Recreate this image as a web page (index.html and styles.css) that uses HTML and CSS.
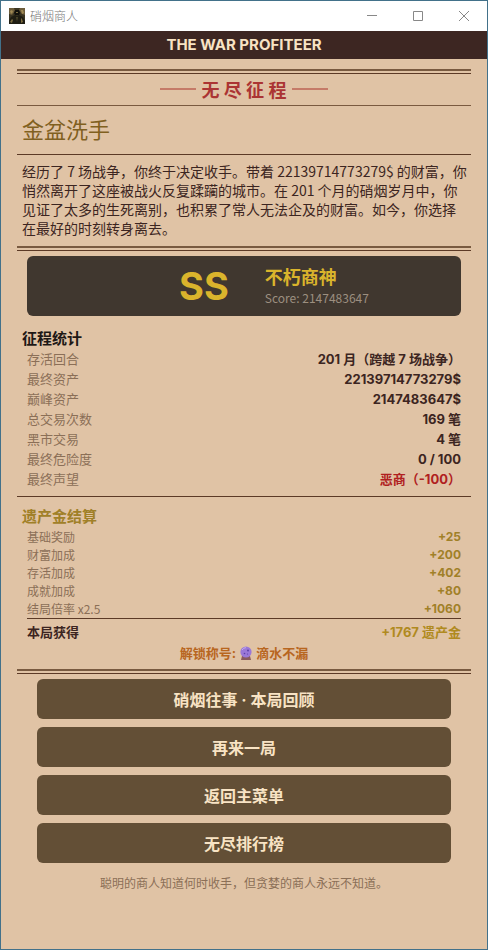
FILE: index.html
```html
<!DOCTYPE html>
<html lang="zh-CN">
<head>
    <meta charset="utf-8" />
    <meta name="viewport" content="width=device-width, initial-scale=1" />
    <title>硝烟商人</title>
    <link rel="stylesheet" href="styles.css">
</head>
<body>

    <div class="window">
        <div class="titlebar">
            <svg class="app-icon" viewBox="0 0 16 16" aria-hidden="true">
                <rect width="16" height="16" fill="#3a3422" />
                <path d="M0 0h5l1 3-3 4-3-1zM11 0h5v7l-3-1-3-4z" fill="#6d5d3b" />
                <path d="M1 3l2-1 1 2-2 2zM12 2l2 0 1 3-2 1z" fill="#a08a55" />
                <path d="M6 2h4l1 3-1 2H6L5 5z" fill="#12110c" />
                <path d="M2 9l4-2 2 1 2-1 4 2 2 4v3H0v-3z" fill="#1f1d13" />
                <path d="M7 4h2v1H7zM3 11l1 1-1 3-2-1zM12 10l1 1 1 3-2 1z" fill="#7c6c40" />
                <path d="M7 9h2l-1 5z" fill="#4b4529" />
            </svg>
            <span class="app-name">硝烟商人</span>
            <div class="controls">
                <button class="control" aria-label="最小化">
                    <svg viewBox="0 0 10 10"><path d="M0 4.5h10" /></svg>
                </button>
                <button class="control" aria-label="最大化">
                    <svg viewBox="0 0 10 10"><path d="M.5 .5h9v9h-9z" /></svg>
                </button>
                <button class="control" aria-label="关闭">
                    <svg viewBox="0 0 10 10"><path d="M0 0l10 10M10 0L0 10" /></svg>
                </button>
            </div>
        </div>

        <header class="banner">THE WAR PROFITEER</header>

        <main class="page">
            <div class="double-rule"></div>
            <h1 class="mode">无 尽 征 程</h1>

            <h2 class="ending">金盆洗手</h2>

            <p class="story">经历了 7 场战争，你终于决定收手。带着 22139714773279$ 的财富，你悄然离开了这座被战火反复蹂躏的城市。在 201 个月的硝烟岁月中，你见证了太多的生死离别，也积累了常人无法企及的财富。如今，你选择在最好的时刻转身离去。</p>
            <div class="double-rule"></div>

            <!-- Final rank -->
            <div class="rank">
                <div class="grade">SS</div>
                <div class="rank-info">
                    <div class="rank-name">不朽商神</div>
                    <div class="score">Score: 2147483647</div>
                </div>
            </div>

            <section class="stats">
                <h3>征程统计</h3>
                <dl>
                    <div class="row"><dt>存活回合</dt><dd>201 月（跨越 7 场战争）</dd></div>
                    <div class="row"><dt>最终资产</dt><dd>22139714773279$</dd></div>
                    <div class="row"><dt>巅峰资产</dt><dd>2147483647$</dd></div>
                    <div class="row"><dt>总交易次数</dt><dd>169 笔</dd></div>
                    <div class="row"><dt>黑市交易</dt><dd>4 笔</dd></div>
                    <div class="row"><dt>最终危险度</dt><dd>0 / 100</dd></div>
                    <div class="row"><dt>最终声望</dt><dd class="bad">恶商（-100）</dd></div>
                </dl>
            </section>

            <section class="legacy">
                <h3>遗产金结算</h3>
                <dl>
                    <div class="row"><dt>基础奖励</dt><dd>+25</dd></div>
                    <div class="row"><dt>财富加成</dt><dd>+200</dd></div>
                    <div class="row"><dt>存活加成</dt><dd>+402</dd></div>
                    <div class="row"><dt>成就加成</dt><dd>+80</dd></div>
                    <div class="row"><dt>结局倍率 x2.5</dt><dd>+1060</dd></div>
                    <div class="row total"><dt>本局获得</dt><dd>+1767 遗产金</dd></div>
                </dl>
                <p class="unlock">
                    解锁称号:
                    <svg class="orb" viewBox="0 0 12 14" aria-hidden="true">
                        <path d="M2 10h8l1 4H1z" fill="#8a5a5c" />
                        <circle cx="6" cy="6" r="5.6" fill="#9a78d8" />
                        <path d="M2 4a5 5 0 0 1 4-2.400" stroke="#c3abf0" fill="none" />
                        <circle cx="8" cy="4.500" r="1" fill="#5b3fa8" />
                        <circle cx="4.500" cy="7.500" r=".8" fill="#5b3fa8" />
                        <circle cx="7.500" cy="8" r=".6" fill="#5b3fa8" />
                    </svg>
                    滴水不漏
                </p>
            </section>
            <div class="double-rule"></div>

            <div class="actions">
                <button class="action">硝烟往事 · 本局回顾</button>
                <button class="action">再来一局</button>
                <button class="action">返回主菜单</button>
                <button class="action">无尽排行榜</button>
            </div>

            <p class="motto">聪明的商人知道何时收手，但贪婪的商人永远不知道。</p>
        </main>
    </div>

</body>
</html>
```
FILE: styles.css
```css
:root {
    --paper: #e0c3a5;
    --ink: #3c2521;
    --line: #5c3a26;
    --brown: #634f36;
    --muted: #8b6f57;
    --gold: #a08028;
    --cjk: "Noto Sans CJK SC", sans-serif;
}

* {
    box-sizing: border-box;
}

body {
    margin: 0;
    font-family: Inter, var(--cjk);
    color: var(--ink);
}

h1, h2, h3, p, dl, dd {
    margin: 0;
}

button {
    border: 0;
    font-family: inherit;
    cursor: pointer;
}

.window {
    min-height: 100vh;
    border: 1px solid #42718a;
    background: var(--paper);
}

/* Window title bar */
.titlebar {
    display: flex;
    align-items: center;
    height: 30px;
    padding-left: 8px;
    background: #fff;
}

.app-icon {
    width: 16px;
    height: 16px;
}

.app-name {
    margin-left: 5px;
    font-family: var(--cjk);
    font-size: 12px;
    font-weight: 300;
    line-height: 16px;
    color: #777;
}

.controls {
    display: flex;
    margin-left: auto;
}

.control {
    display: flex;
    align-items: center;
    justify-content: center;
    width: 46px;
    height: 30px;
    padding: 0;
    background: none;
}

.control svg {
    width: 10px;
    height: 10px;
    fill: none;
    stroke: #888;
}

.banner {
    background: #3d2622;
    color: #f8e3c4;
    font-size: 15px;
    font-weight: 700;
    line-height: 28px;
    text-align: center;
}

.page {
    padding: 10px 16px;
}

.double-rule {
    height: 5px;
    border-top: 2px solid #795a40;
    border-bottom: 1px solid var(--line);
}

.mode {
    display: flex;
    align-items: center;
    justify-content: center;
    gap: 6px;
    height: 32px;
    padding-bottom: 2px;
    border-bottom: 1px solid #7a5a40;
    font-size: 18px;
    color: #ab3433;
}

.mode::before,
.mode::after {
    content: "";
    width: 36px;
    height: 2px;
    background: #c57b68;
}

.ending {
    padding: 0 5px 4px;
    border-bottom: 1px solid var(--line);
    font-family: var(--cjk);
    font-size: 22px;
    font-weight: 400;
    line-height: 44px;
    color: #80601f;
}

.story {
    padding: 7px 2px 8px 5px;
    font-family: var(--cjk);
    font-size: 14px;
    line-height: 19px;
}

/* Rank card */
.rank {
    display: flex;
    align-items: center;
    justify-content: center;
    gap: 36px;
    height: 60px;
    margin: 5px 10px 13px;
    padding-left: 60px;
    border-radius: 6px;
    background: #40372f;
}

.grade {
    font-size: 38px;
    font-weight: 700;
    line-height: 40px;
    color: #dab42c;
}

.rank-name {
    padding-top: 2px;
    font-size: 18px;
    font-weight: 700;
    line-height: 22px;
    color: #dab42c;
}

.score {
    font-family: var(--cjk);
    font-size: 12px;
    line-height: 18px;
    color: #9c8f80;
}

/* Label and value lists */
h3 {
    padding-left: 5px;
    font-size: 15px;
    line-height: 20px;
}

dl {
    padding: 0 10px;
}

.row {
    display: flex;
    justify-content: space-between;
}

dt {
    font-family: var(--cjk);
    color: var(--muted);
}

dd {
    font-weight: 700;
}

.stats {
    padding-bottom: 7px;
    border-bottom: 1px solid var(--line);
}

.stats h3 {
    color: #1e1815;
}

.stats .row {
    font-size: 13px;
    line-height: 20px;
}

.stats .bad {
    color: #b02020;
}

.legacy {
    padding: 10px 0 5px;
}

.legacy h3 {
    padding-bottom: 1px;
}

.legacy h3,
.legacy dd {
    color: var(--gold);
}

.legacy .row {
    font-size: 12px;
    line-height: 18px;
}

.legacy .total {
    padding-top: 3px;
    border-top: 1px solid var(--line);
    font-size: 13px;
    line-height: 20px;
}

.total dt {
    font-weight: 700;
    color: var(--ink);
}

.legacy .total dd {
    color: #b08a20;
}

.unlock {
    display: flex;
    align-items: center;
    justify-content: center;
    gap: 4px;
    font-size: 13px;
    font-weight: 700;
    line-height: 22px;
    color: #b8661f;
}

.orb {
    width: 12px;
    height: 14px;
}

.actions {
    display: flex;
    flex-direction: column;
    gap: 8px;
    padding: 5px 20px 10px;
}

.action {
    height: 40px;
    border-radius: 6px;
    background: var(--brown);
    color: #f8e3c4;
    font-size: 16px;
    font-weight: 700;
}

.motto {
    font-family: var(--cjk);
    font-size: 12px;
    line-height: 20px;
    text-align: center;
    color: var(--muted);
}
```
